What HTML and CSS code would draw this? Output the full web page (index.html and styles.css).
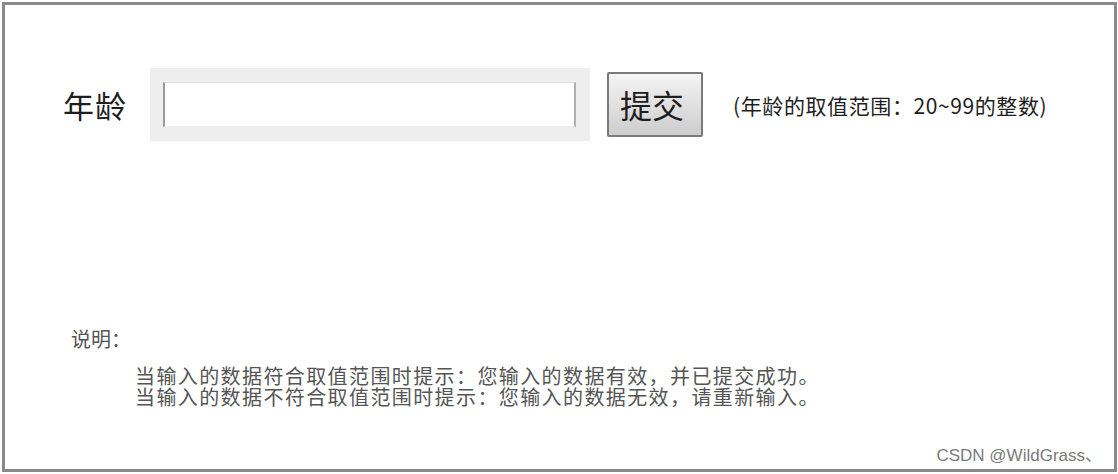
FILE: index.html
```html
<!DOCTYPE html>
<html lang="zh-CN">
<head>
    <meta charset="UTF-8">
    <meta name="viewport" content="width=device-width, initial-scale=1.0">
    <title>年龄</title>
    <link rel="stylesheet" href="styles.css">
</head>
<body>
    <div class="frame">
        <div class="form-row">
            <label class="label" for="age">年龄</label>
            <div class="input-box">
                <input class="age-input" id="age" type="text">
            </div>
            <button class="submit">提交</button>
            <span class="hint">(年龄的取值范围：20~99的整数)</span>
        </div>

        <div class="notes">
            <div class="notes-title">说明：</div>
            <div class="notes-lines">
                <div>当输入的数据符合取值范围时提示：您输入的数据有效，并已提交成功。</div>
                <div>当输入的数据不符合取值范围时提示：您输入的数据无效，请重新输入。</div>
            </div>
        </div>

        <div class="watermark">CSDN @WildGrass、</div>
    </div>
</body>
</html>
```

FILE: styles.css
```css
body {
    margin: 0;
    background: #ffffff;
    font-family: "Noto Sans CJK SC", "Noto Sans", sans-serif;
}
.frame {
    position: relative;
    box-sizing: border-box;
    margin: 2px;
    width: 1115px;
    height: 470px;
    border: 3px solid #8a8a8a;
    background: #ffffff;
}
.form-row {
    display: flex;
    align-items: center;
    padding: 63px 0 0 58px;
}
.label {
    font-size: 31px;
    letter-spacing: 1px;
    color: #1e1e1e;
    width: 87px;
}
.input-box {
    background: #eeeeee;
    padding: 14px 14px 14px 13px;
}
.age-input {
    display: block;
    box-sizing: border-box;
    width: 413px;
    height: 45px;
    margin: 0;
    border: none;
    border-left: 2px solid #9a9a9a;
    border-right: 2px solid #b0b0b0;
    border-top: 1px solid #dddddd;
    border-bottom: 1px solid #eeeeee;
    background: #ffffff;
    outline: none;
}
.submit {
    margin-left: 17px;
    width: 96px;
    height: 65px;
    padding: 0 6px 2px 0;
    border: 2px solid #7a7a7a;
    border-radius: 2px;
    background: linear-gradient(to bottom, #f4f4f4, #cdcdcd);
    font-family: "Noto Sans CJK SC", sans-serif;
    font-size: 32px;
    color: #1e1e1e;
}
.hint {
    margin-left: 30px;
    font-size: 21px;
    letter-spacing: 0.6px;
    color: #1e1e1e;
}
.notes {
    margin-top: 186px;
    padding-left: 66px;
    color: #555555;
}
.notes-title {
    font-size: 20px;
    line-height: 24px;
}
.notes-lines {
    margin-top: 14px;
    padding-left: 64px;
    font-size: 20px;
    letter-spacing: 1.4px;
    line-height: 21px;
}
.watermark {
    position: absolute;
    right: 12px;
    bottom: 3px;
    font-family: "Liberation Sans", "Noto Sans CJK SC", sans-serif;
    font-size: 17px;
    color: #7a7a7a;
}
```
